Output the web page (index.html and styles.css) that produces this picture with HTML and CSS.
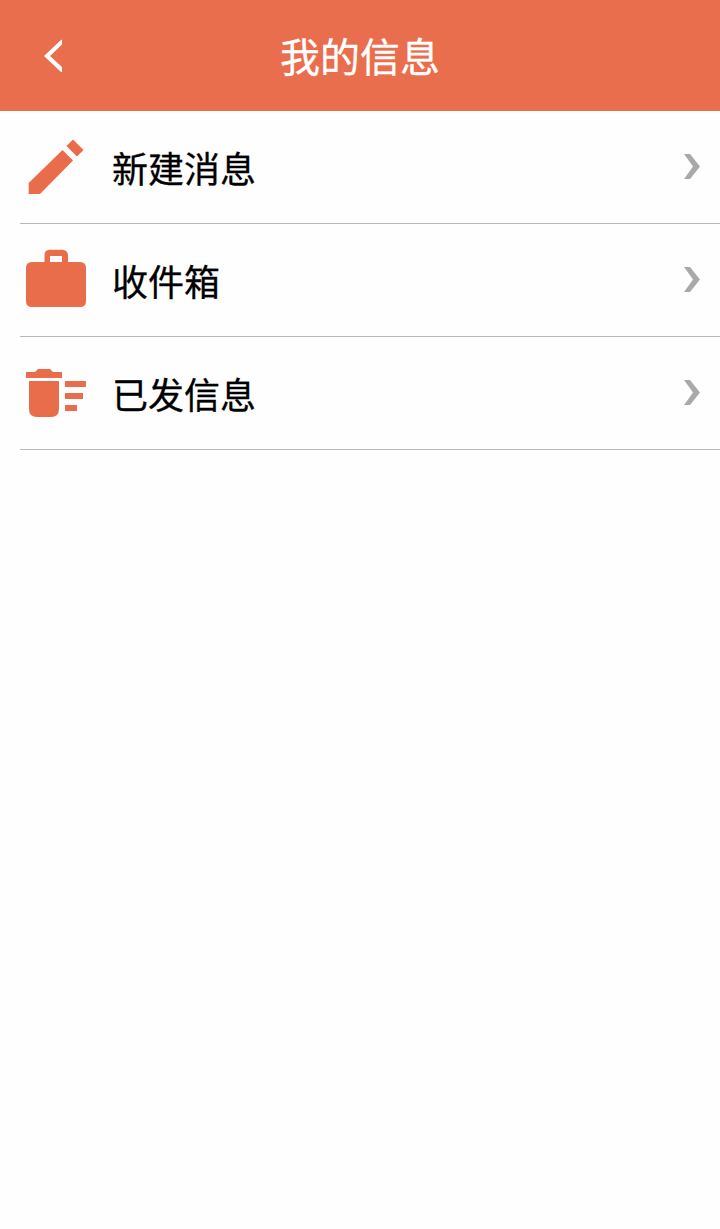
FILE: index.html
```
<!DOCTYPE html>
<html lang="zh-CN">
<head>
  <meta charset="UTF-8" />
  <meta name="viewport" content="width=device-width, initial-scale=1.0"/>
  <title>我的信息</title>
  <link rel="stylesheet" href="styles.css">
</head>
<body>
  <header class="header">
    <a class="back" href="#" aria-label="返回">
      <svg width="24" height="36" viewBox="0 0 24 36"><path d="M20 1.500v5L8 18l12 11v5h-1L2 18 19 2z"/></svg>
    </a>
    <h1>我的信息</h1>
  </header>

  <nav class="menu">
    <a class="menu-item" href="#">
      <svg class="icon" viewBox="0 0 64 64">
        <path d="M4.700 48 38.500 15 49 25.500 16 59H4.700zM49 4.500 59.500 15 53 21.500 42.500 11z"/>
      </svg>
      <span class="label">新建消息</span>
      <svg class="arrow" viewBox="0 0 16 26"><path d="M0 0h6L16 12.500 6 25H0L9 12.500z"/></svg>
    </a>
    <a class="menu-item" href="#">
      <svg class="icon" viewBox="0 0 64 64">
        <path fill-rule="evenodd" d="M20.500 14V7q0-5 5-5.200h13q5 .2 5.500 5.200v7h12q6 0 6 6v33q0 6-6 6H8q-6 0-6-6V20q0-6 6-6zM26 8v6h12V8z"/>
      </svg>
      <span class="label">收件箱</span>
      <svg class="arrow" viewBox="0 0 16 26"><path d="M0 0h6L16 12.500 6 25H0L9 12.500z"/></svg>
    </a>
    <a class="menu-item" href="#">
      <svg class="icon" viewBox="0 0 64 64">
        <path d="M2 11h9l3-3h12l3 3h9v6H2zM5 20h30v28q0 8-8 8H13q-8 0-8-8zM41 20h21v6H41zM41 32h18v6H41zM41 44h12v6H41z"/>
      </svg>
      <span class="label">已发信息</span>
      <svg class="arrow" viewBox="0 0 16 26"><path d="M0 0h6L16 12.500 6 25H0L9 12.500z"/></svg>
    </a>
  </nav>
</body>
</html>
```
FILE: styles.css
```
* {
  box-sizing: border-box;
}
body {
  margin: 0;
  min-height: 100vh;
  background: #fefefe;
  font-family: "Noto Sans CJK SC", sans-serif;
}
a {
  color: inherit;
  text-decoration: none;
}
svg {
  display: block;
}
.header {
  display: grid;
  grid-template-columns: 110px 1fr 110px;
  align-items: center;
  height: 111px;
  background: #e96e4e;
  color: #fff;
}
.header h1 {
  margin: 0;
  padding-bottom: 1px;
  font-size: 40px;
  font-weight: 400;
  line-height: 60px;
  text-align: center;
  -webkit-text-stroke: 0.3px #fff;
}
.back {
  padding-left: 42px;
  fill: #fff;
}
.menu-item {
  display: flex;
  align-items: center;
  height: 113px;
  margin-left: 20px;
  padding: 0 20px 0 4px;
  border-bottom: 1px solid #b9b9b9;
}
.icon {
  width: 64px;
  height: 64px;
  fill: #e96c4b;
}
.label {
  flex: 1;
  margin-left: 24px;
  color: #000;
  font-size: 36px;
  line-height: 54px;
  -webkit-text-stroke: 0.3px #000;
}
.arrow {
  width: 16px;
  height: 26px;
  fill: #a9a9a9;
}
```
